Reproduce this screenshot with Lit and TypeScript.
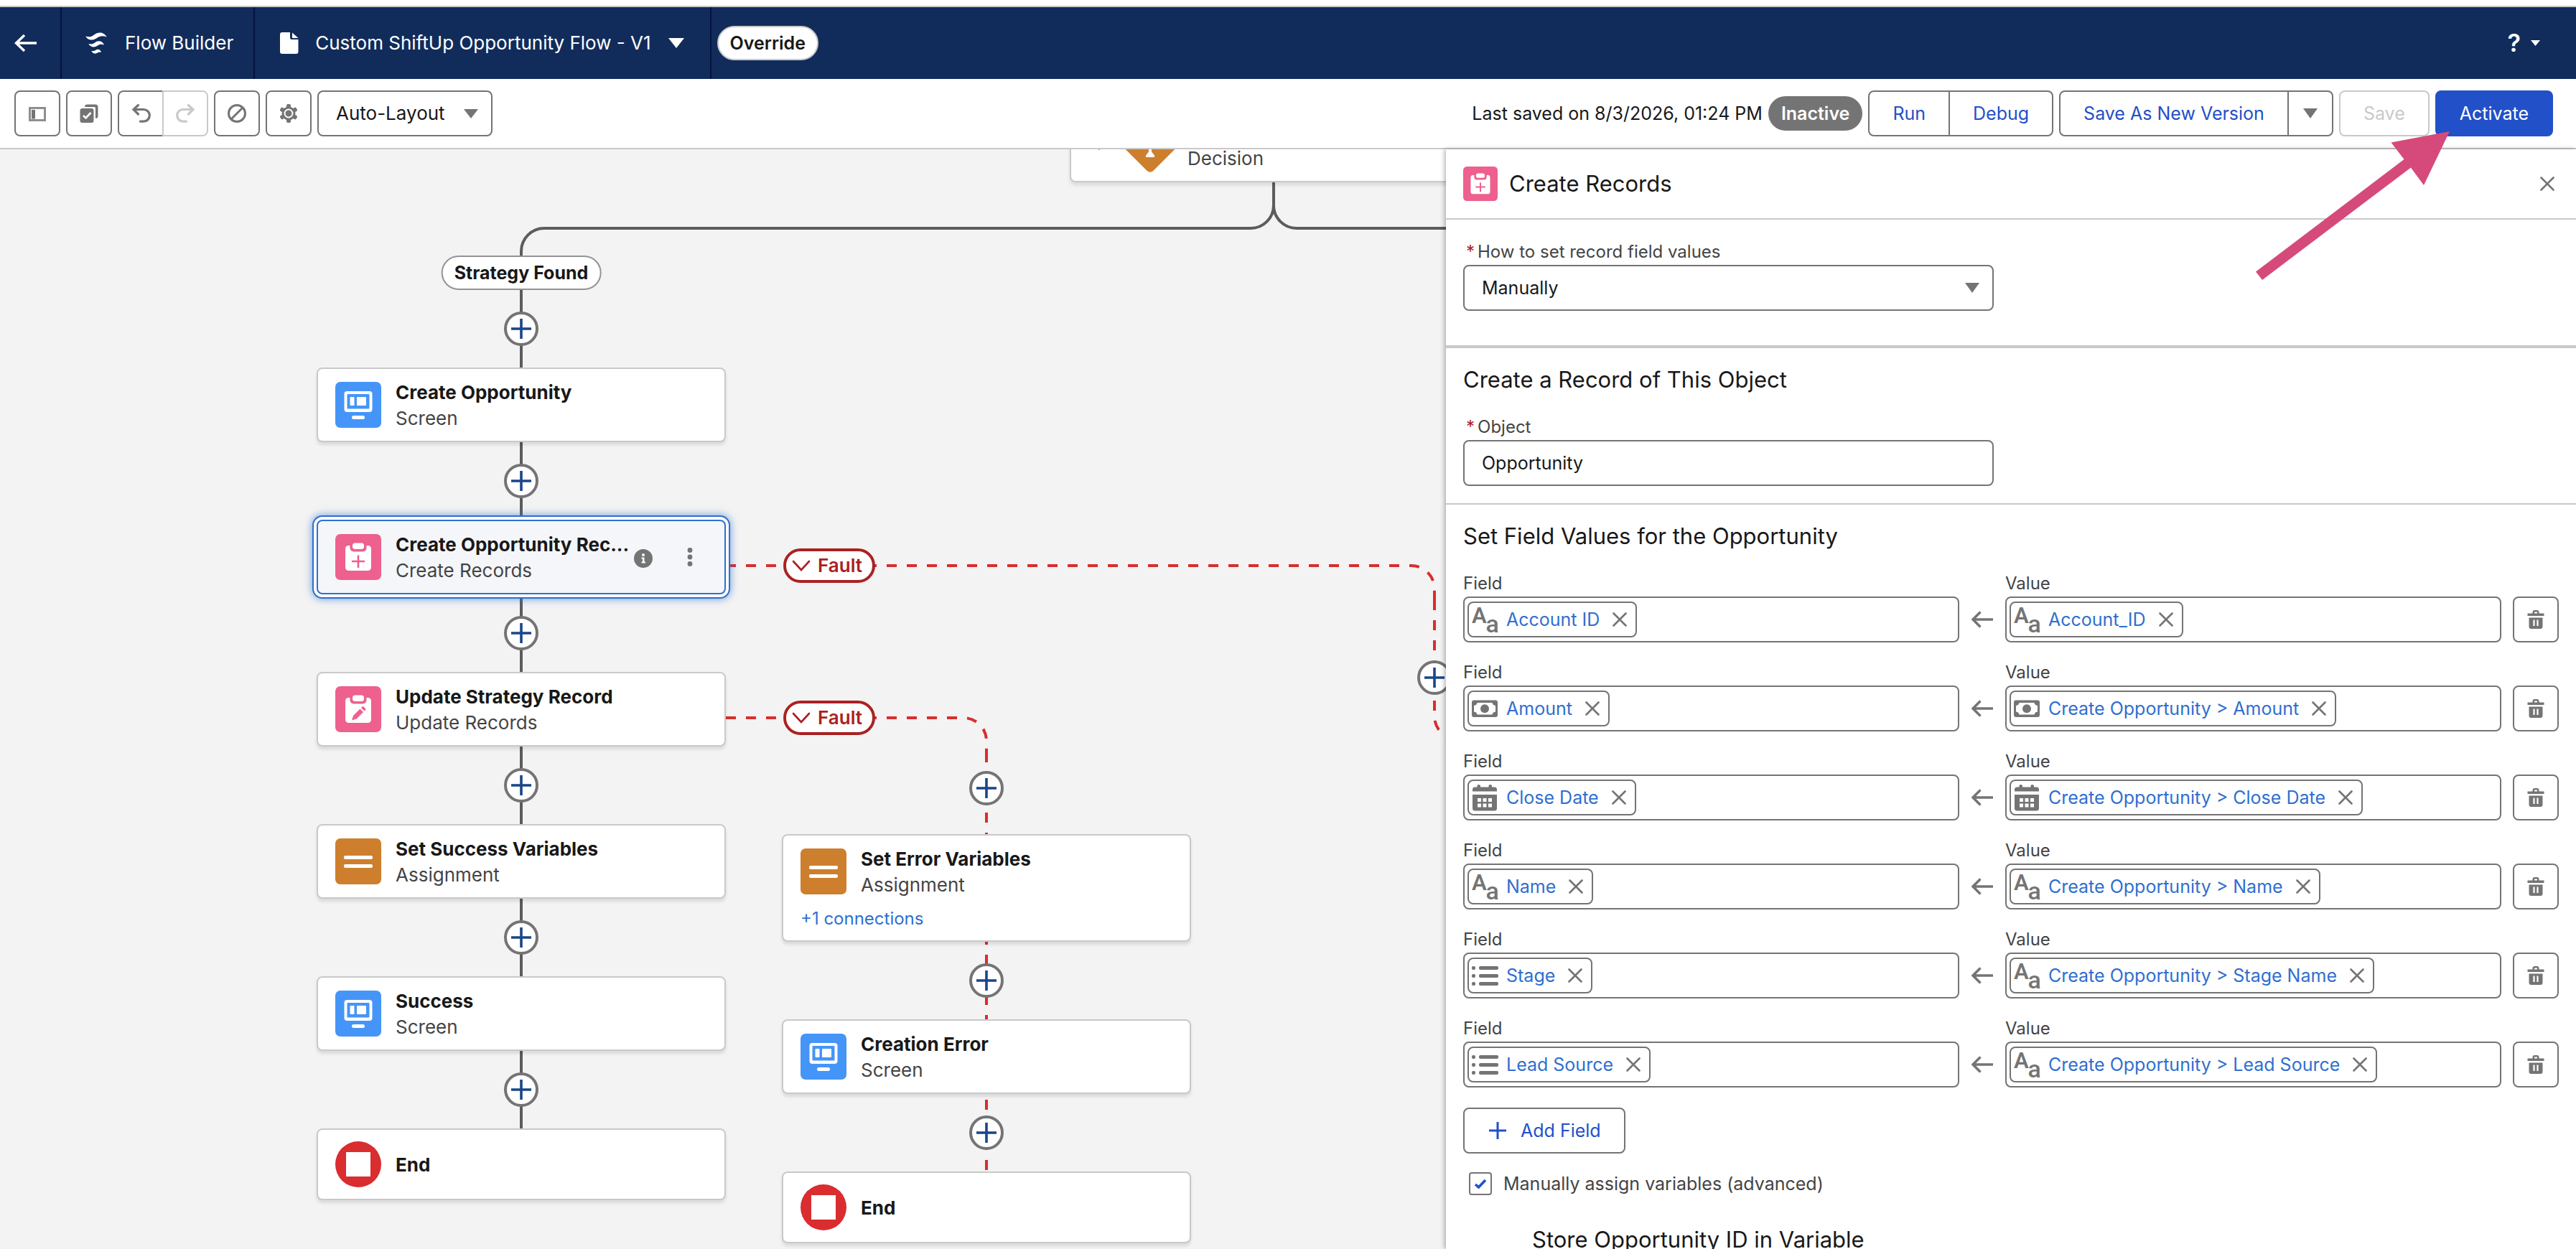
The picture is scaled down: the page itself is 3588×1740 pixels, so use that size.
import { LitElement, html, svg, css, nothing } from "lit";
import { customElement } from "lit/decorators.js";
import { classMap } from "lit/directives/class-map.js";
import { styleMap } from "lit/directives/style-map.js";

type Kind = "screen" | "create" | "update" | "assign" | "end" | "decision";
type DataType = "text" | "cash" | "date" | "list";

interface FlowNode {
  x: number;
  y: number;
  kind: Kind;
  title?: string;
  type?: string;
  more?: string;
  selected?: boolean;
}

interface Mapping {
  field: string;
  fieldType: DataType;
  value: string;
  valueType: DataType;
}

const NODES: FlowNode[] = [
  { x: 1490, y: -58, kind: "decision", type: "Decision" },
  { x: 441, y: 304, kind: "screen", title: "Create Opportunity", type: "Screen" },
  { x: 441, y: 516, kind: "create", title: "Create Opportunity Rec...", type: "Create Records", selected: true },
  { x: 441, y: 728, kind: "update", title: "Update Strategy Record", type: "Update Records" },
  { x: 441, y: 940, kind: "assign", title: "Set Success Variables", type: "Assignment" },
  { x: 441, y: 1152, kind: "screen", title: "Success", type: "Screen" },
  { x: 441, y: 1364, kind: "end", title: "End" },
  { x: 1089, y: 954, kind: "assign", title: "Set Error Variables", type: "Assignment", more: "+1 connections" },
  { x: 1089, y: 1212, kind: "screen", title: "Creation Error", type: "Screen" },
  { x: 1089, y: 1424, kind: "end", title: "End" },
];

const ADD_POINTS = [
  [726, 250], [726, 462], [726, 674], [726, 886], [726, 1098], [726, 1310],
  [1374, 890], [1374, 1158], [1374, 1370], [1998, 736],
];

const FAULTS = [[1091, 556], [1091, 768]];

const MAPPINGS: Mapping[] = [
  { field: "Account ID", fieldType: "text", value: "Account_ID", valueType: "text" },
  { field: "Amount", fieldType: "cash", value: "Create Opportunity > Amount", valueType: "cash" },
  { field: "Close Date", fieldType: "date", value: "Create Opportunity > Close Date", valueType: "date" },
  { field: "Name", fieldType: "text", value: "Create Opportunity > Name", valueType: "text" },
  { field: "Stage", fieldType: "list", value: "Create Opportunity > Stage Name", valueType: "text" },
  { field: "Lead Source", fieldType: "list", value: "Create Opportunity > Lead Source", valueType: "text" },
];

const icon = (w: number, h: number, body: unknown) =>
  html`<svg width=${w} height=${h} viewBox="0 0 ${w} ${h}" aria-hidden="true">${body}</svg>`;

const caret = (w: number, h: number) =>
  icon(w, h, svg`<path d="M0 0H${w}L${w / 2} ${h}Z" fill="currentColor"/>`);

const plus = (w: number, size: number) =>
  icon(w, w, svg`<path d="M${w / 2} 0V${w}M0 ${w / 2}H${w}" stroke="currentColor" stroke-width=${size}/>`);

const cross = () =>
  icon(20, 20, svg`<path d="M1.5 1.5L18.5 18.5M18.5 1.5L1.5 18.5" stroke="currentColor" stroke-width="2.6" stroke-linecap="round"/>`);

const clipboard = svg`
  <rect x="14" y="16" width="36" height="35" rx="4.500" fill="#fff"/>
  <rect x="20.500" y="9" width="23" height="15.500" rx="5" fill="#ee608e"/>
  <rect x="24" y="12.500" width="16" height="8.500" rx="3.500" fill="#fff"/>`;

const kindIcon = (kind: Kind, size = 64) => {
  const art: Record<Kind, unknown> = {
    screen: svg`<rect width="64" height="64" rx="7" fill="#4595f9"/>
      <rect x="12.500" y="13" width="39" height="29" rx="4" fill="#fff"/>
      <rect x="16.500" y="17" width="31" height="20.500" rx="1" fill="#4595f9"/>
      <rect x="20.500" y="21" width="6" height="12" rx="1" fill="#fff"/>
      <rect x="30" y="21" width="13" height="12" rx="1" fill="#fff"/>
      <rect x="23" y="47" width="18" height="5" rx="2.500" fill="#fff"/>`,
    create: svg`<rect width="64" height="64" rx="7" fill="#ee608e"/>${clipboard}
      <path d="M32 29.500V47M23 38H41" stroke="#ee608e" stroke-width="2.600"/>`,
    update: svg`<rect width="64" height="64" rx="7" fill="#ee608e"/>${clipboard}
      <path d="M23 47.500L25 41L34.500 31.500L39 36L29.500 45.500ZM36 30L37.500 28.500Q38.500 27.500 39.500 28.500L42 31Q43 32 42 33L40.500 34.500Z" fill="#ee608e"/>`,
    assign: svg`<rect width="64" height="64" rx="7" fill="#ce7f2e"/>
      <rect x="12" y="24" width="40" height="5" rx="2" fill="#fff"/>
      <rect x="12" y="36" width="40" height="5" rx="2" fill="#fff"/>`,
    end: svg`<circle cx="32" cy="32" r="32" fill="#d92d2f"/><rect x="15" y="15" width="34" height="34" fill="#fff"/>`,
    decision: svg`<rect x="3.500" y="3.500" width="57" height="57" rx="6" transform="rotate(45 32 32)" fill="#ce7f2e"/>
      <path d="M30 16H34V41.500L38 46.500V49H26V46.500L30 41.500ZM18 20H42L47 25L42 30H18Z" fill="#fff"/>`,
  };
  return html`<svg class="kind" width=${size} height=${size} viewBox="0 0 64 64" overflow="visible" aria-hidden="true">${art[kind]}</svg>`;
};

const dataIcon = (type: DataType) => {
  const art: Record<DataType, unknown> = {
    text: svg`<text x="0" y="22.500" font-family="Roboto, sans-serif" font-weight="600" font-size="31" fill="#747474">A</text>
      <text x="19.500" y="36" font-family="Roboto, sans-serif" font-weight="500" font-size="34" fill="#747474">a</text>`,
    cash: svg`<rect y="6.500" width="36" height="23.500" rx="3" fill="#747474"/>
      <path d="M7.500 10H28.500Q29 13.500 33 14V22.500Q29 23 28.500 26.500H7.500Q7 23 3 22.500V14Q7 13.500 7.500 10Z" fill="#fff"/>
      <circle cx="18" cy="18.200" r="6" fill="#747474"/>`,
    date: svg`<path d="M1 9.500V7Q1 3.500 4.500 3.500H7.500V1.500Q7.500 0 9.500 0T12 1.500V3.500H23.500V1.500Q23.500 0 25.500 0T28 1.500V3.500H31.500Q35 3.500 35 7V9.500Z" fill="#747474"/>
      <path d="M1 14H35V33Q35 36.500 31.500 36.500H4.500Q1 36.500 1 33Z" fill="#747474"/>
      <path d="M8 19h5v5h-5zM15.500 19h5v5h-5zM23 19h5v5h-5zM8 26.500h5v5h-5zM15.500 26.500h5v5h-5zM23 26.500h5v5h-5z" fill="#fff"/>`,
    list: svg`<g fill="#747474"><rect x="0" y="5" width="5" height="5" rx="2"/><rect x="0" y="16" width="5" height="5" rx="2"/><rect x="0" y="27" width="5" height="5" rx="2"/>
      <rect x="10" y="5" width="27" height="5" rx="2"/><rect x="10" y="16" width="27" height="5" rx="2"/><rect x="10" y="27" width="27" height="5" rx="2"/></g>`,
  };
  return icon(37, 37, art[type]);
};

const base = css`
  :host {
    --ink: #181818;
    --soft: #444;
    --line: #747474;
    --rule: #c9c9c9;
    --brand: #2250c8;
    --link: #2f6fd0;
    font-family: Inter, "Liberation Sans", sans-serif;
    font-size: 26px;
    line-height: 36px;
    color: var(--ink);
  }
  *, *::before, *::after { box-sizing: border-box; }
  button, input, select { font: inherit; color: inherit; margin: 0; padding: 0; background: none; border: 0; }
  button { display: inline-flex; align-items: center; justify-content: center; }
  h2 { margin: 0; font-weight: 400; font-size: 31px; line-height: 48px; }
  a { color: var(--link); text-decoration: none; }
  svg { display: block; flex: none; }
`;

@customElement("flow-header")
class FlowHeader extends LitElement {
  static styles = [base, css`
    :host { display: flex; height: 102px; border-top: 2px solid var(--rule); background: #112c5b; color: #fff; }
    .cell { display: flex; align-items: center; gap: 24px; padding: 0 28px 0 32px; border-right: 2px solid #03123d; }
    .back { padding: 0 32px 0 20px; }
    .file { gap: 20px; padding-right: 36px; }
    .file svg + span { margin-right: 4px; }
    .tag { align-self: center; margin-left: 8px; padding: 4px 16px; height: 48px; border: 2px solid var(--rule); border-radius: 24px; background: #fff; color: var(--ink); font-size: 25px; font-weight: 600; }
    .help { margin-left: auto; padding: 0 50px; gap: 14px; font-size: 34px; font-weight: 600; }
  `];
  render() {
    return html`
      <button class="cell back" aria-label="Back">
        ${icon(32, 32, svg`<path d="M14 5L2.500 16L14 27M3 16H31" fill="none" stroke="#fff" stroke-width="3.400"/>`)}
      </button>
      <div class="cell">
        ${icon(32, 32, svg`<path fill="#fff" d="M1.300 6.500C6 8 9 7.500 13 4.500C18 .5 26-.5 30.700 7.500C25 5.500 21 6 17 9C11 13 4 12.500 1.300 6.500ZM5.300 17C9 18 11.500 17.500 14 15.500C18 12.500 24 12 27 18.500C23 17 20.500 17.500 18 19.500C13.500 22.800 8 22 5.300 17ZM9.300 26.800C11.500 27.500 13.500 27 15 26C18 24 21.500 24 23 29C21 28 19.500 28.500 18 29.500C15 31.500 11 31 9.300 26.800Z"/>`)}
        <span>Flow Builder</span>
      </div>
      <button class="cell file">
        ${icon(32, 32, svg`<path fill="#fff" d="M6 1H17V8.500Q17 11 19.500 11H28.500V28Q28.500 31 25.500 31H6Q3 31 3 28V4Q3 1 6 1ZM20 1.500L28.500 9H20Z"/>`)}
        <span>Custom ShiftUp Opportunity Flow - V1</span>
        ${caret(22, 14)}
      </button>
      <span class="tag">Override</span>
      <button class="help" aria-label="Help"><span>?</span>${caret(13, 8)}</button>
    `;
  }
}

@customElement("flow-toolbar")
class FlowToolbar extends LitElement {
  static styles = [base, css`
    :host { display: flex; align-items: center; gap: 8px; height: 98px; padding: 0 32px 0 20px; border-bottom: 2px solid var(--rule); background: #fff; font-size: 25px; }
    .btn { height: 64px; padding: 0 32px; border: 2px solid var(--line); border-radius: 8px; background: #fff; color: var(--brand); }
    .tool { width: 64px; padding: 0; color: var(--line); }
    .group { display: flex; }
    .group .btn:first-child { border-radius: 8px 0 0 8px; }
    .group .btn:last-child { border-radius: 0 8px 8px 0; margin-left: -2px; }
    .btn:disabled { color: var(--rule); border-color: var(--rule); }
    .group .more { width: 64px; padding: 0; color: var(--line); }
    .primary { background: var(--brand); border-color: var(--brand); color: #fff; }
    .pick { display: grid; align-items: center; font-size: 26px; }
    .pick > * { grid-area: 1 / 1; }
    .pick select { height: 64px; padding: 0 64px 0 24px; border: 2px solid var(--line); border-radius: 8px; appearance: none; }
    .pick svg { justify-self: end; margin-right: 20px; color: var(--line); pointer-events: none; }
    .saved { margin-left: auto; }
    .state { height: 48px; padding: 6px 18px; border-radius: 24px; background: var(--line); color: #fff; font-weight: 600; }
  `];
  render() {
    return html`
      <button class="btn tool" aria-label="Toggle Toolbox">
        ${icon(32, 32, svg`<rect x="5.500" y="8.500" width="21" height="17" fill="none" stroke="#8e8e8e" stroke-width="3"/><rect x="8" y="11" width="5" height="12.500" fill="#747474"/>`)}
      </button>
      <button class="btn tool" aria-label="Select Elements">
        ${icon(32, 32, svg`<rect x="3.500" y="9" width="19" height="20" rx="3" fill="#747474"/><path d="M10 7Q10 3.500 13.500 3.500H25Q28.500 3.500 28.500 7V20Q28.500 23 25 23V8.500Q25 7 23.500 7Z" fill="#747474"/><path d="M8 19L11.500 22.500L18.500 15" fill="none" stroke="#fff" stroke-width="2.600"/>`)}
      </button>
      <div class="group">
        <button class="btn tool" aria-label="Undo">
          ${icon(32, 32, svg`<path d="M12.500 4.500L6 10.500L12.500 17M6.500 10.500H20A8.300 8.300 0 0 1 20 27.200H15.500" fill="none" stroke="#747474" stroke-width="3.200" stroke-linecap="round"/>`)}
        </button>
        <button class="btn tool" aria-label="Redo" disabled>
          ${icon(32, 32, svg`<path d="M20.500 4.500L27 10.500L20.500 17M26.500 10.500H13A8.300 8.300 0 0 0 13 27.200H17.500" fill="none" stroke="#c9c9c9" stroke-width="3.200" stroke-linecap="round"/>`)}
        </button>
      </div>
      <button class="btn tool" aria-label="Disable">
        ${icon(32, 32, svg`<circle cx="16" cy="16" r="11.500" fill="none" stroke="#747474" stroke-width="3"/><path d="M8.500 23.500L23.500 8.500" stroke="#747474" stroke-width="3"/>`)}
      </button>
      <button class="btn tool" aria-label="Settings">
        ${icon(32, 32, svg`<g fill="#747474"><circle cx="16" cy="16" r="9.500"/>${[0, 60, 120].map((a) => svg`<rect x="13" y="3" width="6" height="26" rx="2" transform="rotate(${a} 16 16)"/>`)}</g><circle cx="16" cy="16" r="5.500" fill="none" stroke="#fff" stroke-width="2"/>`)}
      </button>
      <div class="pick">
        <select aria-label="Layout"><option>Auto-Layout</option></select>
        ${caret(20, 13)}
      </div>
      <span class="saved">Last saved on 8/3/2026, 01:24 PM</span>
      <span class="state">Inactive</span>
      <div class="group">
        <button class="btn">Run</button>
        <button class="btn">Debug</button>
      </div>
      <div class="group">
        <button class="btn">Save As New Version</button>
        <button class="btn more" aria-label="More save options">${caret(20, 14)}</button>
      </div>
      <button class="btn" disabled>Save</button>
      <button class="btn primary">Activate</button>
    `;
  }
}

@customElement("flow-canvas")
class FlowCanvas extends LitElement {
  static styles = [base, css`
    :host { display: block; position: relative; overflow: hidden; background: #f3f3f3; }
    .wires { position: absolute; left: 0; top: 0; fill: none; stroke-width: 4; }
    .flow { stroke: #5c5c5c; }
    .fault { stroke: #d92d2f; stroke-dasharray: 14; }
    .node { position: absolute; display: flex; flex-direction: column; width: 570px; border: 2px solid var(--rule); border-radius: 8px; background: #fff; box-shadow: 0 4px 4px rgba(0, 0, 0, .1); }
    .main { display: flex; align-items: center; gap: 20px; height: 100px; padding: 0 24px; }
    .end .main { height: 96px; }
    .text { display: flex; flex-direction: column; width: 340px; padding-top: 2px; white-space: nowrap; }
    .title { min-height: 36px; font-weight: 700; }
    .type { color: var(--soft); }
    .link { padding: 0 24px 14px; font-size: 24px; line-height: 32px; }
    .selected { border-color: var(--link); background: #f4f6fa; box-shadow: 0 0 0 4px #fff, 0 0 0 6px var(--link), 0 0 12px 6px rgba(47, 111, 208, .7); }
    .info { margin: 4px 0 0 -28px; }
    .dots { margin: 0 0 0 28px; }
    .branch, .faulty { position: absolute; display: flex; align-items: center; height: 48px; border-radius: 24px; background: #fff; font-weight: 600; }
    .branch { left: 726px; top: 148px; transform: translateX(-50%); padding: 0 16px; border: 2px solid #939393; font-size: 25px; font-weight: 700; white-space: nowrap; }
    .faulty { gap: 10px; padding: 0 16px 0 10px; width: 128px; border: 4px solid #aa2122; color: #aa2122; }
    .add { position: absolute; width: 48px; height: 48px; margin: -24px 0 0 -24px; border: 4px solid var(--line); border-radius: 50%; background: #fff; color: #1b4687; }
  `];

  private node(n: FlowNode) {
    return html`
      <article class=${classMap({ node: true, selected: !!n.selected, end: n.kind === "end" })}
        style=${styleMap({ left: `${n.x}px`, top: `${n.y}px` })}>
        <div class="main">
          ${n.kind === "decision"
            ? icon(34, 34, svg`<path d="M6 13L15 22L24 13" fill="none" stroke="#444" stroke-width="3"/>`)
            : nothing}
          ${kindIcon(n.kind)}
          <div class="text">
            <span class="title">${n.title ?? nothing}</span>
            ${n.type ? html`<span class="type">${n.type}</span>` : nothing}
          </div>
          ${n.selected
            ? html`
              <svg class="info" width="26" height="26" viewBox="0 0 26 26" aria-hidden="true">
                <circle cx="13" cy="13" r="13" fill="#747474"/>
                <circle cx="13" cy="8" r="2" fill="#fff"/>
                <path d="M10.500 11.500H14.500V17.500H16V19.500H10.500V17.500H12V13.500H10.500Z" fill="#fff"/>
              </svg>
              <svg class="dots" width="8" height="26" viewBox="0 0 8 26" aria-hidden="true">
                <g fill="#747474"><circle cx="4" cy="3.500" r="3.400"/><circle cx="4" cy="13" r="3.400"/><circle cx="4" cy="22.500" r="3.400"/></g>
              </svg>`
            : nothing}
        </div>
        ${n.more ? html`<a class="link" href="#connections">${n.more}</a>` : nothing}
      </article>`;
  }

  render() {
    return html`
      <svg class="wires" width="2100" height="1600" viewBox="0 0 2100 1600" aria-hidden="true">
        <g class="flow">
          <path d="M1774 46V78A32 32 0 0 1 1742 110H758A32 32 0 0 0 726 142V1366"/>
          <path d="M1774 78A32 32 0 0 0 1806 110H2100"/>
        </g>
        <g class="fault">
          <path d="M1011 580H1966A32 32 0 0 1 1998 612V628"/>
          <path d="M1998 628V790A32 32 0 0 0 2030 822"/>
          <path d="M1011 792H1342A32 32 0 0 1 1374 824V840"/>
          <path d="M1374 840V960"/>
          <path d="M1374 1094V1214"/>
          <path d="M1374 1296V1424"/>
        </g>
      </svg>
      ${NODES.map((n) => this.node(n))}
      <span class="branch">Strategy Found</span>
      ${FAULTS.map(([x, y]) => html`
        <button class="faulty" style=${styleMap({ left: `${x}px`, top: `${y}px` })}>
          ${icon(26, 16, svg`<path d="M2 2L13 14L24 2" fill="none" stroke="currentColor" stroke-width="2.600" stroke-linecap="round"/>`)}
          <span>Fault</span>
        </button>`)}
      ${ADD_POINTS.map(([x, y]) => html`
        <button class="add" aria-label="Add element" style=${styleMap({ left: `${x}px`, top: `${y}px` })}>${plus(28, 3.6)}</button>`)}
    `;
  }
}

@customElement("record-panel")
class RecordPanel extends LitElement {
  static styles = [base, css`
    :host { display: block; position: relative; overflow: hidden; background: #fff; box-shadow: -2px 0 6px rgba(0, 0, 0, .3); font-size: 25px; }
    .head { display: flex; align-items: center; gap: 16px; height: 98px; padding: 0 30px 0 24px; border-bottom: 2px solid var(--rule); }
    .close { margin-left: auto; color: var(--line); }
    .section { padding: 20px 24px 24px; border-bottom: 2px solid var(--rule); }
    .how { padding: 27px 24px 48px; border-bottom-width: 4px; }
    .values { border-bottom: 0; }
    .section h2 { margin-bottom: 24px; }
    .label { display: block; font-size: 24px; line-height: 36px; color: var(--soft); }
    .required { padding-left: 4px; }
    .required i { margin-right: 4px; color: #aa2122; font-style: normal; }
    .half { display: grid; align-items: center; width: calc(50% - 24px); }
    .half > * { grid-area: 1 / 1; }
    .half svg { justify-self: end; margin-right: 20px; color: var(--line); pointer-events: none; }
    .control { width: 100%; height: 64px; padding: 0 24px; border: 2px solid var(--line); border-radius: 8px; background: #fff; appearance: none; }
    .rows { display: grid; gap: 24px; }
    .row { display: grid; grid-template-columns: minmax(0, 1fr) 64px minmax(0, 1fr) 80px; align-items: end; }
    .box { display: flex; align-items: center; height: 64px; padding: 0 4px; border: 2px solid var(--line); border-radius: 8px; }
    .box input { flex: 1; min-width: 0; height: 48px; outline: 0; }
    .chip { display: flex; align-items: center; height: 50px; padding: 0 12px 0 4px; border: 2px solid var(--line); border-radius: 8px; white-space: nowrap; }
    .chip a { margin: 0 18px 0 11px; }
    .chip button { color: var(--line); }
    .from { display: flex; align-items: center; justify-content: center; height: 64px; }
    .trash, .add { height: 64px; border: 2px solid var(--line); border-radius: 8px; background: #fff; }
    .trash { margin-left: 16px; }
    .add { gap: 20px; margin: 28px 0 26px; padding: 0 32px 0 34px; color: var(--brand); }
    .check { display: flex; align-items: center; gap: 16px; height: 32px; margin-left: 8px; color: var(--soft); }
    .tick { display: grid; place-items: center; }
    .tick > * { grid-area: 1 / 1; }
    .tick svg { pointer-events: none; }
    .check input { width: 32px; height: 32px; border: 2px solid var(--line); border-radius: 4px; appearance: none; }
    .store { margin-top: 38px; padding-left: 96px; }
  `];

  private picker(label: string, id: string, type: DataType, text: string) {
    return html`
      <div>
        <label class="label" for=${id}>${label}</label>
        <div class="box">
          <span class="chip">
            ${dataIcon(type)}
            <a href="#resource">${text}</a>
            <button aria-label="Remove ${text}">${cross()}</button>
          </span>
          <input id=${id} type="text">
        </div>
      </div>`;
  }

  render() {
    return html`
      <header class="head">
        ${kindIcon("create", 48)}
        <h2>Create Records</h2>
        <button class="close" aria-label="Close">${cross()}</button>
      </header>
      <section class="section how">
        <label class="label required" for="how"><i>*</i>How to set record field values</label>
        <div class="half">
          <select class="control" id="how"><option>Manually</option></select>
          ${caret(20, 14)}
        </div>
      </section>
      <section class="section">
        <h2>Create a Record of This Object</h2>
        <label class="label required" for="object"><i>*</i>Object</label>
        <div class="half"><input class="control" id="object" type="text" value="Opportunity"></div>
      </section>
      <section class="section values">
        <h2>Set Field Values for the Opportunity</h2>
        <div class="rows">
          ${MAPPINGS.map((m, i) => html`
            <div class="row">
              ${this.picker("Field", `field-${i}`, m.fieldType, m.field)}
              <span class="from">
                ${icon(30, 24, svg`<path d="M12.500 1.500L2 12L12.500 22.500M2.500 12H30" fill="none" stroke="#747474" stroke-width="3.400"/>`)}
              </span>
              ${this.picker("Value", `value-${i}`, m.valueType, m.value)}
              <button class="trash" aria-label="Delete row">
                ${icon(24, 26, svg`<path d="M.5 4.500H23.500V8H.5ZM7.500 5V3Q7.500 0 10.500 0H13.500Q16.500 0 16.500 3V5H14V2.500H10V5ZM2.500 10.500H21.500V23Q21.500 26 18.500 26H5.500Q2.500 26 2.500 23Z" fill="#747474"/><path d="M9.500 13.500V22M14.500 13.500V22" stroke="#fff" stroke-width="2.200"/>`)}
              </button>
            </div>`)}
        </div>
        <button class="add">${plus(24, 3)}<span>Add Field</span></button>
        <label class="check">
          <span class="tick">
            <input type="checkbox" checked>
            ${icon(18, 14, svg`<path d="M2 8L6.500 12L16 2" fill="none" stroke="#2250c8" stroke-width="3.600"/>`)}
          </span>
          <span>Manually assign variables (advanced)</span>
        </label>
        <div class="store"><h2>Store Opportunity ID in Variable</h2></div>
      </section>
    `;
  }
}

@customElement("app-root")
class AppRoot extends LitElement {
  static styles = [base, css`
    :host { display: flex; flex-direction: column; position: relative; height: 100vh; padding-top: 8px; box-sizing: border-box; overflow: hidden; background: #fff; }
    .work { display: grid; grid-template-columns: minmax(0, 1007fr) minmax(0, 787fr); flex: 1; min-height: 0; }
    .pointer { position: absolute; top: 183px; right: 176px; }
  `];
  render() {
    return html`
      <flow-header></flow-header>
      <flow-toolbar></flow-toolbar>
      <main class="work">
        <flow-canvas></flow-canvas>
        <record-panel></record-panel>
      </main>
      <svg class="pointer" width="270" height="207" viewBox="0 0 270 207" aria-hidden="true">
        <path d="M270 0L234 75L216 50.500L9 207L0 195.500L206.500 39L188.500 15.500Z" fill="#d54a7b"/>
      </svg>
    `;
  }
}
